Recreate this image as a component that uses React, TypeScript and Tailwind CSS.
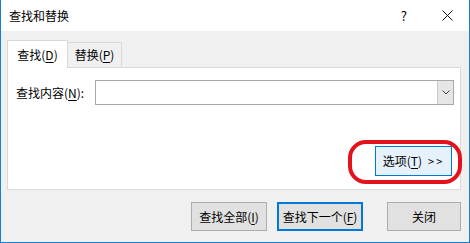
import React from "react";

const font = { fontFamily: '"Noto Sans CJK SC", "Noto Sans", sans-serif' };

function U({ c }: { c: string }) {
  return <span className="underline underline-offset-2">{c}</span>;
}

export default function App() {
  return (
    <div
      className="relative flex h-[243px] w-[470px] flex-col overflow-hidden border-x border-b border-[#1b7fd1] text-[12px] text-black"
      style={font}
    >
      {/* title bar */}
      <div className="flex h-[31px] shrink-0 items-center bg-white pl-[8px]">
        <span className="text-[12px]">查找和替换</span>
        <span className="ml-auto mr-[35px] text-[13px]">?</span>
        <svg width="11" height="11" viewBox="0 0 11 11" className="mr-[16px]">
          <path d="M0.5 0.5 L10.5 10.5 M10.5 0.5 L0.5 10.5" stroke="#111" strokeWidth="1" />
        </svg>
      </div>

      {/* body */}
      <div className="flex flex-1 flex-col bg-[#f0f0f0] pl-[6px] pr-[8px] pt-[9px]">
        <div className="flex h-[27px] items-end">
          <div className="relative z-10 -mb-px flex h-[28px] w-[61px] items-center justify-center border border-b-0 border-[#d9d9d9] bg-white">
            查找(<U c="D" />)
          </div>
          <div className="flex h-[25px] w-[54px] items-center justify-center border border-l-0 border-b-0 border-[#d9d9d9] bg-[#f0f0f0]">
            替换(<U c="P" />)
          </div>
        </div>

        <div className="flex h-[123px] flex-col border border-[#d9d9d9] bg-white pl-[8px] pr-[6px] pt-[12px]">
          <div className="flex items-center">
            <span className="w-[79px]">
              查找内容(<U c="N" />):
            </span>
            <div className="flex h-[25px] flex-1 border border-[#a8a8a8] bg-white">
              <div className="flex-1" />
              <div className="flex w-[16px] items-center justify-center border-l border-[#c8c8c8] bg-[#e6e6e6]">
                <svg width="8" height="5" viewBox="0 0 8 5">
                  <path d="M0.5 0.5 L4 4 L7.5 0.5" stroke="#444" strokeWidth="1" fill="none" />
                </svg>
              </div>
            </div>
          </div>
          <div className="mt-[41px] flex justify-end pr-[2px]">
            <div className="flex h-[30px] w-[77px] items-center justify-center border border-[#0078d7] bg-[#e5f1fb]">
              选项(<U c="T" />)<span className="ml-[6px] text-[11px] tracking-[2px]">&gt;&gt;</span>
            </div>
          </div>
        </div>

        <div className="mt-[12px] flex justify-end gap-[10px]">
          <div className="flex h-[29px] w-[76px] items-center justify-center border border-[#adadad] bg-[#e1e1e1]">
            查找全部(<U c="I" />)
          </div>
          <div className="flex h-[29px] w-[86px] items-center justify-center border-2 border-[#0078d7] bg-[#e1e1e1]">
            查找下一个(<U c="F" />)
          </div>
          <div className="ml-[14px] flex h-[29px] w-[74px] items-center justify-center border border-[#adadad] bg-[#e1e1e1]">
            关闭
          </div>
        </div>
      </div>

      {/* red annotation */}
      <div className="pointer-events-none absolute left-[347px] top-[140px] h-[44px] w-[114px] rounded-[18px] border-[4px] border-[#e3121b]" />
    </div>
  );
}
